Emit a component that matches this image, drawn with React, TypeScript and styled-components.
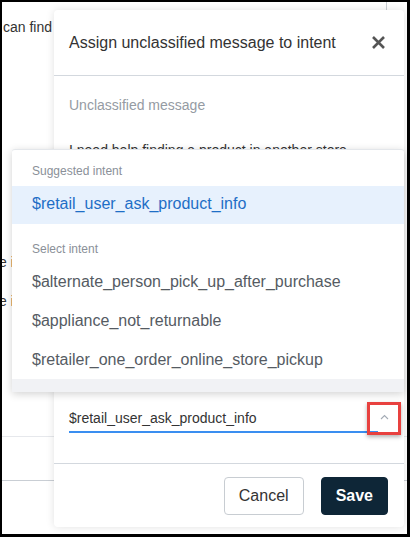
import React from 'react';
import styled, { createGlobalStyle } from 'styled-components';

const GlobalStyle = createGlobalStyle`
  html, body {
    margin: 0;
    padding: 0;
    background: #ffffff;
  }
  body {
    font-family: "Liberation Sans", Arial, sans-serif;
  }
  * {
    box-sizing: border-box;
  }
`;

const Frame = styled.div`
  position: relative;
  width: 410px;
  height: 537px;
  border-style: solid;
  border-color: #000;
  border-width: 2px 3px 3px 2px;
  background: #fff;
  overflow: hidden;
`;

// page behind the dialog
const BgList = styled.div`
  display: flex;
  flex-direction: column;
`;

const BgTopRow = styled.div`
  display: flex;
  height: 48px;
`;

const BgCell = styled.div`
  flex: 1;
  padding: 15px 0 0 1px;
  font-size: 14px;
  line-height: 20px;
  color: #333;
`;

const BgDivider = styled.div`
  width: 21px;
  border-left: 1px solid #c9ced4;
`;

const BgText = styled.div<{ $gap: number }>`
  margin-top: ${p => p.$gap}px;
  margin-left: -3px;
  font-size: 14px;
  line-height: 20px;
  color: #333;
`;

const BgRule = styled.div<{ $gap: number; $color: string }>`
  margin-top: ${p => p.$gap}px;
  border-top: 1px solid ${p => p.$color};
`;

// dialog
const Modal = styled.div`
  position: absolute;
  left: 52px;
  top: 8px;
  width: 350px;
  height: 517px;
  display: flex;
  flex-direction: column;
  background: #fff;
  border-radius: 4px;
  box-shadow: 0 0 8px rgba(0, 0, 0, 0.12);
`;

const Header = styled.div`
  display: flex;
  align-items: center;
  justify-content: space-between;
  height: 66px;
  padding: 0 18px 0 15px;
  border-bottom: 1px solid #d3d8de;
`;

const Title = styled.h2`
  margin: 0;
  font-size: 16px;
  font-weight: 400;
  color: #333;
`;

const CloseButton = styled.button`
  display: flex;
  align-items: center;
  justify-content: center;
  width: 16px;
  height: 16px;
  padding: 0;
  border: 0;
  background: none;
  cursor: pointer;
`;

const Body = styled.div`
  flex: 1;
  display: flex;
  flex-direction: column;
  padding: 0 15px 30px;
`;

const FieldLabel = styled.div`
  margin-top: 19px;
  font-size: 14px;
  line-height: 20px;
  color: #959ba3;
`;

const MessageText = styled.div`
  margin-top: 25px;
  font-size: 14px;
  line-height: 20px;
  color: #333;
`;

const ComboRow = styled.div`
  margin-top: auto;
  display: flex;
  align-items: center;
  height: 29px;
`;

const ComboValue = styled.div`
  flex: 1;
  height: 29px;
  line-height: 28px;
  font-size: 14px;
  color: #333;
  border-bottom: 2px solid #3a8ef0;
`;

const ChevronBox = styled.div`
  width: 11px;
  display: flex;
  justify-content: flex-end;
  padding-bottom: 3px;
`;

const Footer = styled.div`
  display: flex;
  justify-content: flex-end;
  gap: 17px;
  padding: 13px 16px 12px;
  border-top: 1px solid #d3d8de;
`;

const Button = styled.button<{ $primary?: boolean }>`
  height: 38px;
  padding: 0 14px;
  border-radius: 4px;
  font-family: "Liberation Sans", Arial, sans-serif;
  font-size: 16px;
  font-weight: ${p => (p.$primary ? 700 : 400)};
  color: ${p => (p.$primary ? '#fff' : '#333')};
  background: ${p => (p.$primary ? '#0e2637' : '#fff')};
  border: 1px solid ${p => (p.$primary ? '#0e2637' : '#c8cdd2')};
`;

// intent dropdown menu, opened upward over the dialog
const Menu = styled.div`
  position: absolute;
  left: 10px;
  top: 147px;
  width: 392px;
  height: 243px;
  overflow: hidden;
  background: #fff;
  border-top: 1px solid #e4e7eb;
  border-radius: 3px 3px 0 0;
  box-shadow: 0 2px 8px rgba(0, 0, 0, 0.18);
`;

const GroupLabel = styled.div<{ $top: number; $bottom: number }>`
  padding: ${p => p.$top}px 20px ${p => p.$bottom}px;
  font-size: 12px;
  line-height: 14px;
  color: #8a9098;
`;

const Option = styled.div<{ $selected?: boolean; $hover?: boolean }>`
  height: ${p => (p.$selected ? 38 : 39)}px;
  padding: 0 20px;
  line-height: ${p => (p.$selected ? 36 : 39)}px;
  font-size: 16px;
  white-space: nowrap;
  color: ${p => (p.$selected ? '#1e6ec6' : '#555b63')};
  background: ${p => (p.$selected ? '#e7f1fd' : p.$hover ? '#f1f2f5' : 'transparent')};
`;

const Highlight = styled.div`
  position: absolute;
  left: 365px;
  top: 400px;
  width: 34px;
  height: 33px;
  border: 3px solid #e8413f;
  box-shadow: 0 2px 4px rgba(0, 0, 0, 0.3);
`;

const CloseIcon = () => (
  <svg width="15" height="15" viewBox="0 0 15 15">
    <path d="M2 2 L13 13 M13 2 L2 13" stroke="#555" strokeWidth="2.6" strokeLinecap="butt" />
  </svg>
);

const ChevronUp = () => (
  <svg width="9" height="6" viewBox="0 0 9 6">
    <path d="M1 5 L4.5 1.5 L8 5" fill="none" stroke="#a3abb5" strokeWidth="1.1" />
  </svg>
);

const otherIntents = [
  '$alternate_person_pick_up_after_purchase',
  '$appliance_not_returnable',
  '$retailer_one_order_online_store_pickup',
  '$product_in_other_store_inventory_request',
];

export default function App() {
  return (
    <>
      <GlobalStyle />
      <Frame>
        <BgList>
          <BgTopRow>
            <BgCell>can find</BgCell>
            <BgDivider />
          </BgTopRow>
          <BgText $gap={202}>e i</BgText>
          <BgText $gap={19}>e i</BgText>
          <BgRule $gap={125} $color="#e6e8ec" />
          <BgRule $gap={43} $color="#c9ced4" />
        </BgList>

        <Modal>
          <Header>
            <Title>Assign unclassified message to intent</Title>
            <CloseButton aria-label="Close">
              <CloseIcon />
            </CloseButton>
          </Header>
          <Body>
            <FieldLabel>Unclassified message</FieldLabel>
            <MessageText>I need help finding a product in another store</MessageText>
            <ComboRow>
              <ComboValue>$retail_user_ask_product_info</ComboValue>
              <ChevronBox>
                <ChevronUp />
              </ChevronBox>
            </ComboRow>
          </Body>
          <Footer>
            <Button>Cancel</Button>
            <Button $primary>Save</Button>
          </Footer>
        </Modal>

        <Menu>
          <GroupLabel $top={14} $bottom={8}>Suggested intent</GroupLabel>
          <Option $selected>$retail_user_ask_product_info</Option>
          <GroupLabel $top={18} $bottom={6}>Select intent</GroupLabel>
          {otherIntents.map((name, i) => (
            <Option key={name} $hover={i === otherIntents.length - 1}>
              {name}
            </Option>
          ))}
        </Menu>

        <Highlight />
      </Frame>
    </>
  );
}
